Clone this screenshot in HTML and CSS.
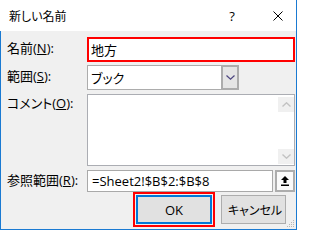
FILE: index.html
```html
<!DOCTYPE html>
<html lang="ja">
<head>
<meta charset="utf-8">
<title>新しい名前</title>
<link rel="stylesheet" href="styles.css">
</head>
<body>
<div class="window">
  <div class="titlebar">
    <span class="title">新しい名前</span>
    <span class="help">?</span>
    <svg class="close" width="10" height="10" viewBox="0 0 10 10"><path d="M0.5 0.5 L9.5 9.5 M9.5 0.5 L0.5 9.5" stroke="#000" stroke-width="1" fill="none"/></svg>
  </div>
  <div class="content">
    <div class="row row-name">
      <span class="label">名前(<u>N</u>):</span>
      <div class="name-field">地方</div>
    </div>
    <div class="row row-scope">
      <span class="label">範囲(<u>S</u>):</span>
      <div class="select">
        <span class="select-value">ブック</span>
        <span class="select-btn"><svg width="9" height="5" viewBox="0 0 9 5"><path d="M0.5 0.5 L4.5 4.2 L8.5 0.5" stroke="#4d4680" stroke-width="1.2" fill="none"/></svg></span>
      </div>
    </div>
    <div class="row row-comment">
      <span class="label">コメント(<u>O</u>):</span>
      <div class="textarea">
        <div class="scrollbar">
          <div class="sb-btn"><svg width="9" height="5" viewBox="0 0 9 5"><path d="M0.5 4.5 L4.5 0.8 L8.5 4.5" stroke="#c2c2c2" stroke-width="1.4" fill="none"/></svg></div>
          <div class="sb-track"></div>
          <div class="sb-btn"><svg width="9" height="5" viewBox="0 0 9 5"><path d="M0.5 0.5 L4.5 4.2 L8.5 0.5" stroke="#c2c2c2" stroke-width="1.4" fill="none"/></svg></div>
        </div>
      </div>
    </div>
    <div class="row row-ref">
      <span class="label">参照範囲(<u>R</u>):</span>
      <div class="ref-input">=Sheet2!$B$2:$B$8</div>
      <div class="ref-btn"><svg width="8" height="10" viewBox="0 0 8 10"><path d="M4 0 L8 4 L5.5 4 L5.5 7 L2.5 7 L2.5 4 L0 4 Z" fill="#000"/><rect x="0" y="8.5" width="8" height="1.5" fill="#000"/></svg></div>
    </div>
    <div class="buttons">
      <div class="ok-highlight"><div class="btn btn-ok">OK</div></div>
      <div class="btn btn-cancel">キャンセル</div>
    </div>
    <svg class="grip" width="8" height="8" viewBox="0 0 8 8">
      <rect x="6" y="0" width="1" height="1" fill="#b8b8b8"/>
      <rect x="4" y="2" width="1" height="1" fill="#b8b8b8"/>
      <rect x="6" y="2" width="1" height="1" fill="#b8b8b8"/>
      <rect x="2" y="4" width="1" height="1" fill="#b8b8b8"/>
      <rect x="4" y="4" width="1" height="1" fill="#b8b8b8"/>
      <rect x="6" y="4" width="1" height="1" fill="#b8b8b8"/>
      <rect x="0" y="6" width="1" height="1" fill="#b8b8b8"/>
      <rect x="2" y="6" width="1" height="1" fill="#b8b8b8"/>
      <rect x="4" y="6" width="1" height="1" fill="#b8b8b8"/>
      <rect x="6" y="6" width="1" height="1" fill="#b8b8b8"/>
    </svg>
  </div>
</div>
</body>
</html>
```

FILE: styles.css
```css
html, body {
  margin: 0;
  padding: 0;
  background: #ffffff;
}

body {
  font-family: "Open Sans", "Noto Sans CJK JP", sans-serif;
  font-size: 13px;
  color: #000;
  font-feature-settings: "palt";
}

.window {
  width: 297px;
  height: 230px;
  box-sizing: border-box;
  border-right: 1px solid #1a7ad2;
  border-bottom: 1px solid #1a7ad2;
  display: flex;
  flex-direction: column;
}

.titlebar {
  height: 31px;
  flex: none;
  background: #fff;
  display: flex;
  align-items: center;
}

.title {
  flex: 1;
  padding-left: 9px;
  font-family: "Noto Sans CJK JP", sans-serif;
  font-size: 12px;
  line-height: 16px;
  padding-top: 1px;
}

.help {
  width: 10px;
  text-align: center;
  font-size: 13px;
  line-height: 16px;
  margin-right: 36px;
}

.close {
  flex: none;
  margin-right: 13px;
}

.content {
  flex: 1;
  position: relative;
  background: #f0f0f0;
  border-left: 1px solid #1a7ad2;
  padding: 6px 1px 0 6px;
}

.row {
  display: flex;
}

.label {
  flex: none;
  width: 80px;
  line-height: 16px;
  white-space: nowrap;
}

.label u {
  text-underline-offset: 1px;
}

.row-name {
  height: 25px;
  margin-bottom: 3px;
}

.row-name .label {
  padding-top: 3px;
}

.name-field {
  flex: 1;
  box-sizing: border-box;
  border: 2px solid #ff0000;
  background: #fff;
  padding-left: 2px;
  display: flex;
  align-items: center;
}

.row-scope {
  height: 25px;
  margin-bottom: 4px;
}

.row-scope .label {
  padding-top: 3px;
}

.select {
  width: 152px;
  display: flex;
}

.select-value {
  flex: 1;
  background: #fff;
  border: 1px solid #acacac;
  border-right: none;
  padding-left: 3px;
  display: flex;
  align-items: center;
}

.select-btn {
  width: 14px;
  background: #e5e5e5;
  border: 2px solid #acacac;
  display: flex;
  align-items: center;
  justify-content: center;
}

.row-comment {
  height: 72px;
  margin-bottom: 4px;
}

.row-comment .label {
  padding-top: 1px;
}

.textarea {
  flex: 1;
  box-sizing: border-box;
  border: 1px solid #abadb3;
  background: #fff;
  display: flex;
  justify-content: flex-end;
}

.scrollbar {
  width: 16px;
  display: flex;
  flex-direction: column;
  padding: 2px 0 1px;
}

.sb-btn {
  height: 15px;
  background: #f0f0f0;
  display: flex;
  align-items: center;
  justify-content: center;
}

.sb-track {
  flex: 1;
}

.row-ref {
  height: 22px;
}

.row-ref .label {
  padding-top: 2px;
}

.ref-input {
  flex: 1;
  box-sizing: border-box;
  border: 1px solid #a9a9a9;
  background: #fff;
  padding-left: 4px;
  display: flex;
  align-items: center;
  white-space: nowrap;
}

.ref-btn {
  width: 20px;
  box-sizing: border-box;
  margin-left: 2px;
  border: 2px solid #adadad;
  background: #fbfbfb;
  display: flex;
  align-items: center;
  justify-content: center;
}

.buttons {
  display: flex;
  justify-content: flex-end;
  align-items: center;
  padding-right: 9px;
}

.ok-highlight {
  border: 2px solid #ff0000;
  padding: 1px;
  background: #f0f0f0;
}

.btn {
  box-sizing: border-box;
  height: 29px;
  background: #e1e1e1;
  display: flex;
  align-items: center;
  justify-content: center;
  white-space: nowrap;
}

.btn-ok {
  width: 76px;
  border: 2px solid #0078d7;
}

.btn-cancel {
  width: 65px;
  margin-left: 6px;
  border: 1px solid #adadad;
  font-size: 12px;
  padding-left: 3px;
}

.grip {
  position: absolute;
  right: 1px;
  bottom: 1px;
}
```
